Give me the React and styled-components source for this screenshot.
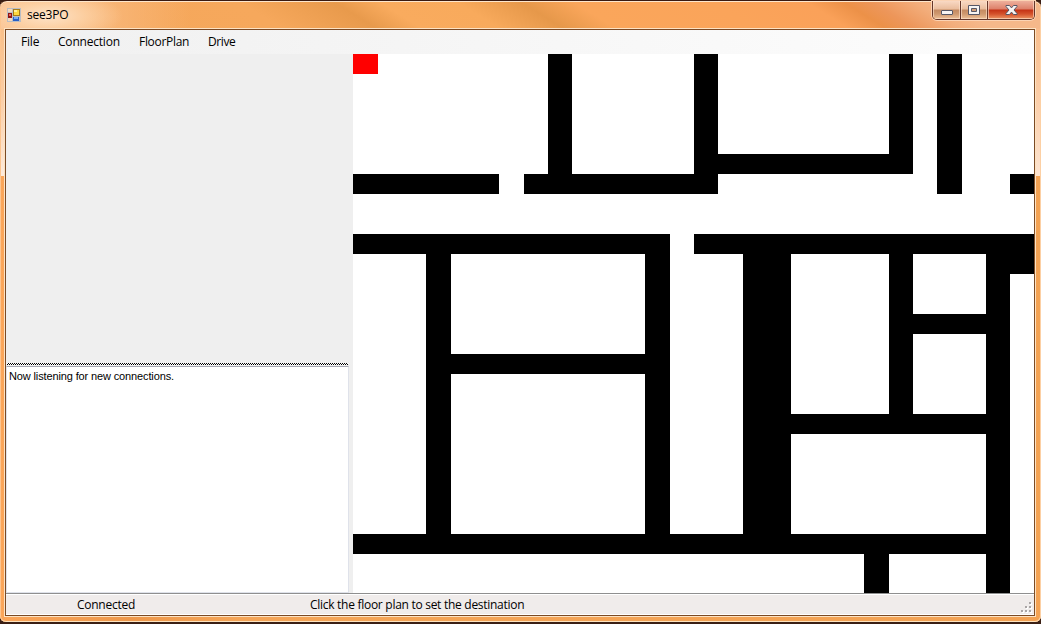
import React from 'react';
import styled, { createGlobalStyle } from 'styled-components';

const Global = createGlobalStyle`
  * { box-sizing: border-box; }
  body { margin: 0; background: #3a1f14; overflow: hidden; }
`;

const Frame = styled.div`
  width: 1041px;
  height: 622px;
  display: flex;
  flex-direction: column;
  border-top: 1px solid #3a1a10;
  border-radius: 7px 7px 6px 6px;
  padding: 0 6px 6px 5px;
  font-family: "Open Sans", "Noto Sans", sans-serif;
  font-size: 12px;
  color: #000;
  box-shadow: inset 0 1px 0 #fde6cc, inset 1px 0 0 #fcc590, inset -1px 0 0 #fcd0a4, inset 0 -1px 0 #fde3bf;
  background:
    linear-gradient(180deg, #f9c08a 0, #fbcba0 60px, #fdebdc 147px) 0 28px / 4px 147px no-repeat,
    linear-gradient(180deg, #f8bd8c 0, #fbcba4 60px, #fde4d0 147px) 100% 28px / 5px 147px no-repeat,
    radial-gradient(ellipse 75px 26px at 48px 15px, #fde3c8 0, rgba(253, 214, 172, .7) 50%, rgba(250, 193, 144, 0) 100%) 0 0 / 1041px 28px no-repeat,
    linear-gradient(90deg, #fac190 0, #f9ba80 80px, rgba(249, 170, 95, 0) 190px) 0 0 / 1041px 28px no-repeat,
    linear-gradient(32deg, #f4a75a 0, #f6a85c 150px, #e89a4c 200px, #f9ab5e 224px, #f8aa5c 265px, #e6984a 299px, #faa65b 327px, #faa45a 400px, #faa159 450px, #ec9148 470px, #ed965a 485px, #f3ae7c 508px, #f5b88a 525px) 0 0 / 1041px 28px no-repeat,
    linear-gradient(90deg, #fba65a 0, #ee984b 130px, #f5a557 240px, #f3a253 100%);
`;

const TitleBar = styled.header`
  height: 28px;
  flex: none;
  display: flex;
  align-items: flex-start;
  justify-content: space-between;
`;

const Title = styled.div`
  display: flex;
  align-items: center;
  gap: 6px;
  padding: 5px 0 0 2px;
  line-height: 18px;
`;

const Controls = styled.div`
  display: flex;
  height: 19px;
  border: 1px solid #66372a;
  border-top: 0;
  border-radius: 0 0 5px 5px;
  overflow: hidden;
  box-shadow: 0 0 0 1px #fbd3b4;
`;

const Control = styled.button`
  width: ${(p) => p.$width}px;
  height: 18px;
  padding: 0;
  border: 0;
  border-left: ${(p) => (p.$divided ? '1px solid #66372a' : '0')};
  display: flex;
  align-items: center;
  justify-content: center;
  background: ${(p) =>
    p.$danger
      ? 'linear-gradient(#eeb09c 0, #dd806a 8px, #c43216 9px, #d4522c 13px, #ed9664 18px)'
      : 'linear-gradient(#f9d9c4 0, #eabd9d 8px, #c48a62 9px, #cf9970 13px, #eec199 18px)'};
  box-shadow: inset 1px 0 rgba(255, 230, 210, .6), inset -1px -1px rgba(255, 230, 210, .6);
`;

const Client = styled.main`
  flex: 1;
  min-height: 0;
  display: flex;
  flex-direction: column;
  border: 1px solid #7b4a24;
  outline: 1px solid #fde3c4;
  background: #efefef;
`;

const MenuBar = styled.nav`
  height: 24px;
  flex: none;
  display: flex;
  align-items: center;
  gap: 19px;
  padding-left: 15px;
  background: linear-gradient(90deg, #f0f0f0, #fdfdfd);
`;

const Label = styled.span`
  display: block;
  flex: none;
  width: ${(p) => p.$width}px;
  letter-spacing: ${(p) => p.$track || 0}px;
  line-height: 18px;
  white-space: nowrap;
`;

const Workspace = styled.div`
  height: 539px;
  flex: none;
  display: flex;
`;

const Sidebar = styled.section`
  width: 347px;
  display: flex;
  flex-direction: column;
  padding-right: 4px;
`;

const CameraPane = styled.div`
  height: 309px;
  flex: none;
  background: #efefef;
`;

const Splitter = styled.div`
  height: 2px;
  flex: none;
  margin: 0 1px;
  background: repeating-conic-gradient(#000 0 25%, #fff 0 50%) 0 0 / 2px 2px;
`;

const Log = styled.div`
  flex: 1;
  margin-top: 1px;
  border: 1px solid #dfe2ea;
  border-top: 1px solid #a8a9b2;
  background: #fff;
  padding: 3px 2px;
  font: 11px/13px "Liberation Sans", Arial, sans-serif;
  letter-spacing: -.13px;
`;

const StatusBar = styled.footer`
  flex: 1;
  display: flex;
  align-items: center;
  justify-content: space-between;
  padding: 0 1px 0 71px;
  border-top: 1px solid #8f8f8f;
  border-bottom: 1px solid #fff;
  box-shadow: inset 0 1px #fff;
  background: #f0eceb;
`;

const StatusItems = styled.div`
  display: flex;
  gap: 175px;
  padding-top: 2px;
`;

const Drawing = styled.svg`
  display: block;
  flex: none;
`;

const Grip = styled(Drawing)`
  align-self: flex-end;
`;

const WALLS = [
  [195, 0, 24, 120], [341, 0, 24, 140], [536, 0, 24, 120], [584, 0, 25, 140],
  [365, 100, 195, 20], [0, 120, 146, 20], [171, 120, 194, 20], [657, 120, 24, 20],
  [0, 180, 317, 20], [341, 180, 340, 20], [657, 200, 24, 20],
  [73, 200, 25, 280], [292, 200, 25, 280], [98, 300, 194, 20],
  [390, 200, 48, 280], [536, 200, 24, 160], [633, 200, 24, 339],
  [560, 260, 73, 20], [438, 360, 195, 20], [0, 480, 657, 20], [511, 500, 25, 39],
];

function FloorPlan() {
  return (
    <Drawing width="681" height="539" shapeRendering="crispEdges">
      <rect width="681" height="539" fill="#fff" />
      <rect width="25" height="20" fill="#f00" />
      {WALLS.map(([x, y, w, h]) => (
        <rect key={`${x}-${y}`} x={x} y={y} width={w} height={h} />
      ))}
    </Drawing>
  );
}

function AppIcon() {
  return (
    <Drawing width="14" height="14" shapeRendering="crispEdges">
      <rect width="14" height="14" fill="#b9bdc4" />
      <rect x="1" y="1" width="4" height="3" fill="#f5d9bd" />
      <rect x="1" y="10" width="4" height="3" fill="#f5d9bd" />
      <rect x="6" y="1" width="7" height="7" fill="#a77b18" />
      <rect x="7" y="2" width="5" height="5" fill="#ffd83f" />
      <rect x="7" y="2" width="3" height="2" fill="#fff09a" />
      <rect x="1" y="5" width="4" height="5" fill="#8d1515" />
      <rect x="2" y="6" width="2" height="2" fill="#ed6258" />
      <rect x="6" y="9" width="6" height="4" fill="#285fc5" />
      <rect x="7" y="9" width="4" height="2" fill="#79adf5" />
    </Drawing>
  );
}

function MinimizeGlyph() {
  return (
    <Drawing width="12" height="18">
      <rect x=".5" y="9.5" width="11" height="4" rx=".5" fill="#f7f4f2" stroke="#565766" />
    </Drawing>
  );
}

function MaximizeGlyph() {
  return (
    <Drawing width="12" height="18">
      <path d="M.5 4.5h11v9H.5z" fill="#f7f4f2" stroke="#565766" />
      <path d="M3.5 7.5h5v3h-5z" fill="#d49f78" stroke="#565766" />
    </Drawing>
  );
}

function CloseGlyph() {
  return (
    <Drawing width="13" height="18">
      <path
        d="M1 4.5h3.5l2 2.4 2-2.4H12v1L9 9l3 3.5v1H8.5l-2-2.4-2 2.4H1v-1L4 9 1 5.5z"
        fill="#f7f4f2"
        stroke="#565766"
      />
    </Drawing>
  );
}

function ResizeGrip() {
  const dots = [[8, 0], [4, 4], [8, 4], [0, 8], [4, 8], [8, 8]];
  return (
    <Grip width="12" height="12" shapeRendering="crispEdges">
      {dots.map(([x, y]) => (
        <g key={`${x}-${y}`}>
          <rect x={x + 1} y={y + 1} width="2" height="2" fill="#fff" />
          <rect x={x} y={y} width="2" height="2" fill="#a9a5a5" />
        </g>
      ))}
    </Grip>
  );
}

export default function App() {
  return (
    <>
      <Global />
      <Frame>
        <TitleBar>
          <Title>
            <AppIcon />
            <Label $width={42} $track={-0.2}>see3PO</Label>
          </Title>
          <Controls>
            <Control $width={27} aria-label="Minimize"><MinimizeGlyph /></Control>
            <Control $width={27} $divided aria-label="Maximize"><MaximizeGlyph /></Control>
            <Control $width={47} $divided $danger aria-label="Close"><CloseGlyph /></Control>
          </Controls>
        </TitleBar>
        <Client>
          <MenuBar>
            <Label $width={18} $track={-0.2}>File</Label>
            <Label $width={62} $track={-0.2}>Connection</Label>
            <Label $width={50} $track={-0.3}>FloorPlan</Label>
            <Label $width={28} $track={-0.4}>Drive</Label>
          </MenuBar>
          <Workspace>
            <Sidebar>
              <CameraPane />
              <Splitter />
              <Log>Now listening for new connections.</Log>
            </Sidebar>
            <FloorPlan />
          </Workspace>
          <StatusBar>
            <StatusItems>
              <Label $width={58} $track={-0.26}>Connected</Label>
              <Label $width={214} $track={-0.28}>Click the floor plan to set the destination</Label>
            </StatusItems>
            <ResizeGrip />
          </StatusBar>
        </Client>
      </Frame>
    </>
  );
}
